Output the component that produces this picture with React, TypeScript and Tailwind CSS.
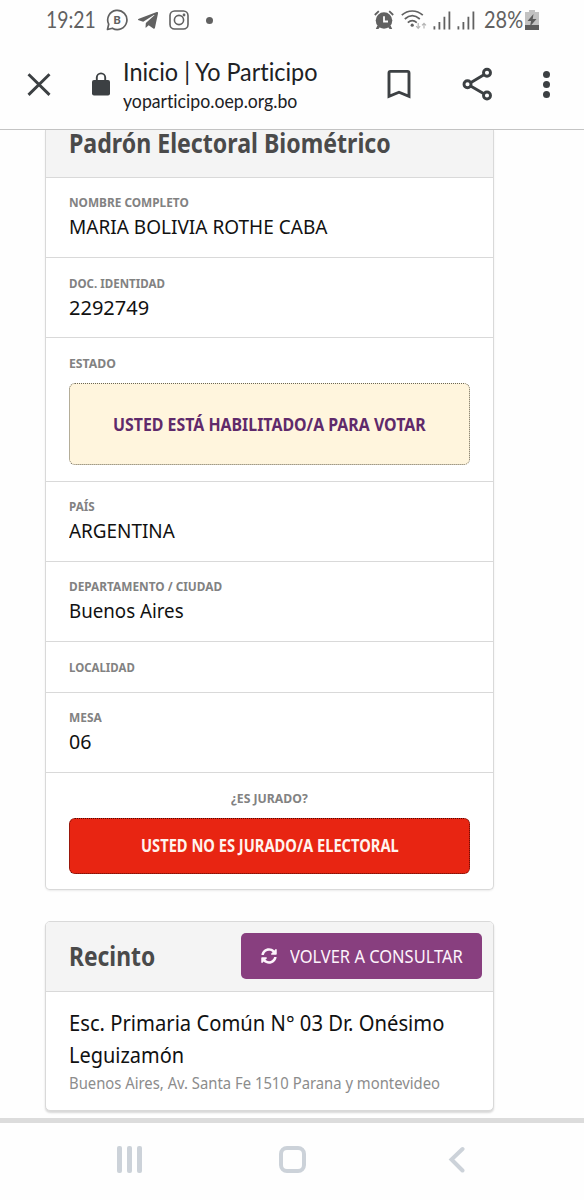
import { useLayoutEffect, useRef, useState } from "react";
import type { ReactNode } from "react";
import { FaSyncAlt, FaTelegramPlane } from "react-icons/fa";

// Condenses a single line of text horizontally so that it takes up `width` pixels.
function FitText({ width, className = "", children }: { width: number; className?: string; children: ReactNode }) {
  const ref = useRef<HTMLSpanElement>(null);
  const [scale, setScale] = useState(1);

  useLayoutEffect(() => {
    if (ref.current) setScale(width / ref.current.offsetWidth);
  }, [width]);

  return (
    <span className={`block ${className}`} style={{ width }}>
      <span
        ref={ref}
        className="inline-block origin-left whitespace-nowrap"
        style={{ transform: `scaleX(${scale})` }}
      >
        {children}
      </span>
    </span>
  );
}

function StatusBar() {
  return (
    <div className="flex h-10 items-center text-[#616161]">
      <FitText width={50} className="ml-[46px] font-['Lato'] text-[22.5px] leading-10">
        19:21
      </FitText>
      <svg className="ml-[10px] h-[22px] w-[22px]" viewBox="0 0 22 22" fill="none" stroke="currentColor" strokeWidth="1.7">
        <path d="M2.7 15.2A9.6 9.6 0 1 1 6.4 19.2L1.5 20.5Z" strokeLinejoin="round" />
        <text x="11.2" y="14.6" textAnchor="middle" fontSize="11.5" fontWeight="700" fontFamily="Roboto" fill="currentColor" stroke="none">
          B
        </text>
      </svg>
      <FaTelegramPlane className="ml-[9px] h-[23px] w-[22px]" />
      <svg className="ml-[10px] h-5 w-5" viewBox="0 0 20 20" fill="none" stroke="currentColor" strokeWidth="1.6">
        <rect x="1" y="1" width="18" height="18" rx="4.6" />
        <circle cx="10" cy="10" r="4.6" />
        <circle cx="15" cy="5" r="0.6" fill="currentColor" />
      </svg>
      <span className="ml-[17px] h-[7px] w-[7px] rounded-full bg-[#616161]" />

      <svg className="ml-[161px] h-5 w-5" viewBox="0 0 20 20">
        <path d="M3.4 15.500 1.800 19h2.600l1.600-2M16.600 15.500 18.200 19h-2.600l-1.600-2" fill="currentColor" />
        <circle cx="10" cy="10.500" r="8.300" fill="currentColor" />
        <path d="M.8 5 4.800 1.200M19.200 5 15.200 1.200" stroke="currentColor" strokeWidth="1.800" />
        <path d="M10 6.200v5.300h4" fill="none" stroke="#fff" strokeWidth="1.800" />
      </svg>
      <svg className="ml-[7px] h-5 w-[26px]" viewBox="0 0 26 20" fill="none" stroke="currentColor" strokeWidth="1.700">
        <path d="M.8 5.200C7-.4 15.500-.4 21.800 5.200M3.800 9C8.500 4.800 14 4.800 18.800 9M6.800 12.600c3-2.600 6-2.600 9 0" />
        <circle cx="11.200" cy="15.200" r="1.600" fill="currentColor" stroke="none" />
        <path d="M17.200 13v5M15.200 16.200l2 2.100 2-2.100M23 18.500v-5.200M21 15.400l2-2.100 2 2.100" stroke="#b5b5b5" strokeWidth="1.200" />
      </svg>
      <SignalBars className="ml-[6px]" />
      <SignalBars className="ml-[6px]" />
      <FitText width={39} className="ml-[9px] font-['Lato'] text-[22.5px] leading-10">
        28%
      </FitText>
      <svg className="ml-[2px] h-5 w-[14px]" viewBox="0 0 14 20">
        <path d="M0 2h4V0h6v2h4v13H0z" fill="#c2c2c2" />
        <path d="M0 15h14v5H0z" fill="#5c5c5c" />
        <path d="M8.500 4 2.500 11h3.600L5 16.500 11.500 9H7.700z" fill="#5c5c5c" />
      </svg>
    </div>
  );
}

function SignalBars({ className }: { className: string }) {
  return (
    <svg className={`h-5 w-[18px] ${className}`} viewBox="0 0 18 20" fill="currentColor">
      <path d="M.5 16.200h1.800V19.500H.5zM5.500 12h1.800v7.500H5.500zM10.500 6.700h1.800v12.800h-1.800zM15.500 1.500h1.800v18h-1.800z" />
    </svg>
  );
}

function BrowserBar() {
  return (
    <div className="flex h-[90px] items-start text-[#3c4043]">
      <svg className="mt-[33px] ml-[27px] h-6 w-6" viewBox="0 0 24 24" stroke="currentColor" strokeWidth="2.900">
        <path d="M1.500 1.300 22.500 21.900M22.500 1.300 1.500 21.900" />
      </svg>
      <svg className="mt-[32px] ml-[41px] h-6 w-[18px]" viewBox="0 0 18 24">
        <rect x="0" y="8" width="18" height="15.500" rx="2" fill="currentColor" />
        <path d="M4.800 9V5.600a4.200 4.200 0 0 1 8.400 0V9" fill="none" stroke="currentColor" strokeWidth="1.900" />
      </svg>
      <div className="ml-[13px] font-['Lato'] text-[#202124] [font-variant-ligatures:none]">
        <FitText width={194} className="mt-[16px] text-[24.5px] leading-[31px]">
          Inicio | Yo Participo
        </FitText>
        <FitText width={174} className="text-[19px] leading-[27px]">
          yoparticipo.oep.org.bo
        </FitText>
      </div>
      <svg className="mt-[29px] ml-[70px] h-[31px] w-6" viewBox="0 0 24 31" fill="none" stroke="currentColor" strokeWidth="2.900">
        <path d="M2 27.400V3.900Q2 2.400 3.500 2.400H20.500Q22 2.400 22 3.900V27.400L12 23.200z" />
      </svg>
      <svg className="mt-[27px] ml-[51px] h-[34px] w-[31px]" viewBox="0 0 31 34" fill="none" stroke="currentColor" strokeWidth="2.900">
        <path d="M9 15.500 21.500 8M9 19.200l12.500 7.300" />
        <circle cx="5.500" cy="17.300" r="3.500" />
        <circle cx="25" cy="5.800" r="3.500" />
        <circle cx="25" cy="28.500" r="3.500" />
      </svg>
      <div className="mt-[31px] ml-[50px] flex flex-col gap-[3px]">
        <span className="h-[7px] w-[7px] rounded-full bg-[#3c4043]" />
        <span className="h-[7px] w-[7px] rounded-full bg-[#3c4043]" />
        <span className="h-[7px] w-[7px] rounded-full bg-[#3c4043]" />
      </div>
    </div>
  );
}

function Label({ width, children }: { width: number; children: ReactNode }) {
  return (
    <FitText width={width} className="text-[13px] leading-4 font-bold text-[#828282]">
      {children}
    </FitText>
  );
}

function Value({ width, children }: { width: number; children: ReactNode }) {
  return (
    <FitText width={width} className="text-[20.5px] leading-[33px] text-[#111]">
      {children}
    </FitText>
  );
}

export default function App() {
  return (
    <div className="flex h-[1200px] w-[584px] flex-col overflow-hidden bg-[#fefefe] font-['Noto_Sans',sans-serif]">
      <header className="h-[130px] shrink-0 border-b border-[#c4c4c4] bg-[#fefefe]">
        <StatusBar />
        <BrowserBar />
      </header>

      <main className="h-[988px] shrink-0 pr-[90px] pl-[45px]">
        <section className="h-[760px] rounded-b-[5px] border border-t-0 border-[#d9d9d9] bg-white shadow-[0_1px_2px_rgba(0,0,0,0.08)]">
          <div className="h-12 border-b border-[#d9d9d9] bg-[#f4f4f4] pl-[23px]">
            <FitText width={322} className="text-[26px] leading-[26px] font-bold text-[#4a4a4a]">
              Padrón Electoral Biométrico
            </FitText>
          </div>
          <div className="h-20 border-b border-[#d9d9d9] px-[23px] pt-4">
            <Label width={120}>NOMBRE COMPLETO</Label>
            <Value width={258}>MARIA BOLIVIA ROTHE CABA</Value>
          </div>
          <div className="h-20 border-b border-[#d9d9d9] px-[23px] pt-[17px]">
            <Label width={96}>DOC. IDENTIDAD</Label>
            <Value width={80}>2292749</Value>
          </div>
          <div className="h-36 border-b border-[#d9d9d9] px-[23px] pt-[17px]">
            <Label width={47}>ESTADO</Label>
            <div className="mt-3 flex h-[82px] items-center justify-center rounded-[6px] border border-dotted border-[#6b6655] bg-[#fff5dd] pt-px">
              <FitText width={313} className="text-[17px] leading-6 font-bold text-[#5f2a6b]">
                USTED ESTÁ HABILITADO/A PARA VOTAR
              </FitText>
            </div>
          </div>
          <div className="h-20 border-b border-[#d9d9d9] px-[23px] pt-4">
            <Label width={26}>PAÍS</Label>
            <Value width={106}>ARGENTINA</Value>
          </div>
          <div className="h-20 border-b border-[#d9d9d9] px-[23px] pt-4">
            <Label width={153}>DEPARTAMENTO / CIUDAD</Label>
            <Value width={115}>Buenos Aires</Value>
          </div>
          <div className="h-[51px] border-b border-[#d9d9d9] px-[23px] pt-[17px]">
            <Label width={66}>LOCALIDAD</Label>
          </div>
          <div className="h-20 border-b border-[#d9d9d9] px-[23px] pt-4">
            <Label width={33}>MESA</Label>
            <Value width={22}>06</Value>
          </div>
          <div className="px-[23px] pt-[17px]">
            <div className="flex justify-center">
              <Label width={77}>¿ES JURADO?</Label>
            </div>
            <div className="mt-3 flex h-14 items-center justify-center rounded-[6px] border border-dotted border-[#4d0a05] bg-[#e82512]">
              <FitText width={258} className="text-[17px] leading-6 font-bold text-[#fff3ee]">
                USTED NO ES JURADO/A ELECTORAL
              </FitText>
            </div>
          </div>
        </section>

        <section className="mt-[31px] h-[190px] rounded-[5px] border border-[#d9d9d9] bg-white shadow-[0_2px_2px_rgba(0,0,0,0.15)]">
          <div className="flex h-[70px] items-center justify-between rounded-t-[4px] border-b border-[#d9d9d9] bg-[#f4f4f4] pr-[11px] pl-[23px]">
            <FitText width={86} className="mb-[2px] text-[26px] leading-[36px] font-bold text-[#4a4a4a]">
              Recinto
            </FitText>
            <button className="mb-px flex h-[46px] w-[241px] items-center rounded-[5px] bg-[#883f7f] pl-[19px] text-[#fdf3fb]">
              <FaSyncAlt className="ml-px h-4 w-4" />
              <FitText width={173} className="ml-[13px] text-left text-[17.5px] leading-6">
                VOLVER A CONSULTAR
              </FitText>
            </button>
          </div>
          <div className="px-[23px] pt-[15px]">
            <FitText width={375} className="text-[21.5px] leading-8 text-[#111]">
              Esc. Primaria Común N° 03 Dr. Onésimo
            </FitText>
            <FitText width={115} className="text-[21.5px] leading-8 text-[#111]">
              Leguizamón
            </FitText>
            <FitText width={371} className="text-[15.5px] leading-6 text-[#8c8c8c]">
              Buenos Aires, Av. Santa Fe 1510 Parana y montevideo
            </FitText>
          </div>
        </section>
      </main>

      <nav className="flex h-[82px] shrink-0 items-start border-t-[5px] border-[#dcdcdc] bg-[#fefefe]">
        <div className="mt-[23px] ml-[117px] flex gap-[5px]">
          <span className="h-[27px] w-[5px] rounded-[2px] bg-[#ccd2d9]" />
          <span className="h-[27px] w-[5px] rounded-[2px] bg-[#ccd2d9]" />
          <span className="h-[27px] w-[5px] rounded-[2px] bg-[#ccd2d9]" />
        </div>
        <span className="mt-[23px] ml-[137px] h-[27px] w-[27px] rounded-[8px] border-4 border-[#ccd2d9]" />
        <svg className="mt-[23px] ml-[142px] h-[27px] w-[18px]" viewBox="0 0 18 27" fill="none" stroke="#ccd2d9" strokeWidth="4">
          <path d="M14.500 3 3.500 13.500 14.500 24.500" strokeLinecap="round" />
        </svg>
      </nav>
    </div>
  );
}
